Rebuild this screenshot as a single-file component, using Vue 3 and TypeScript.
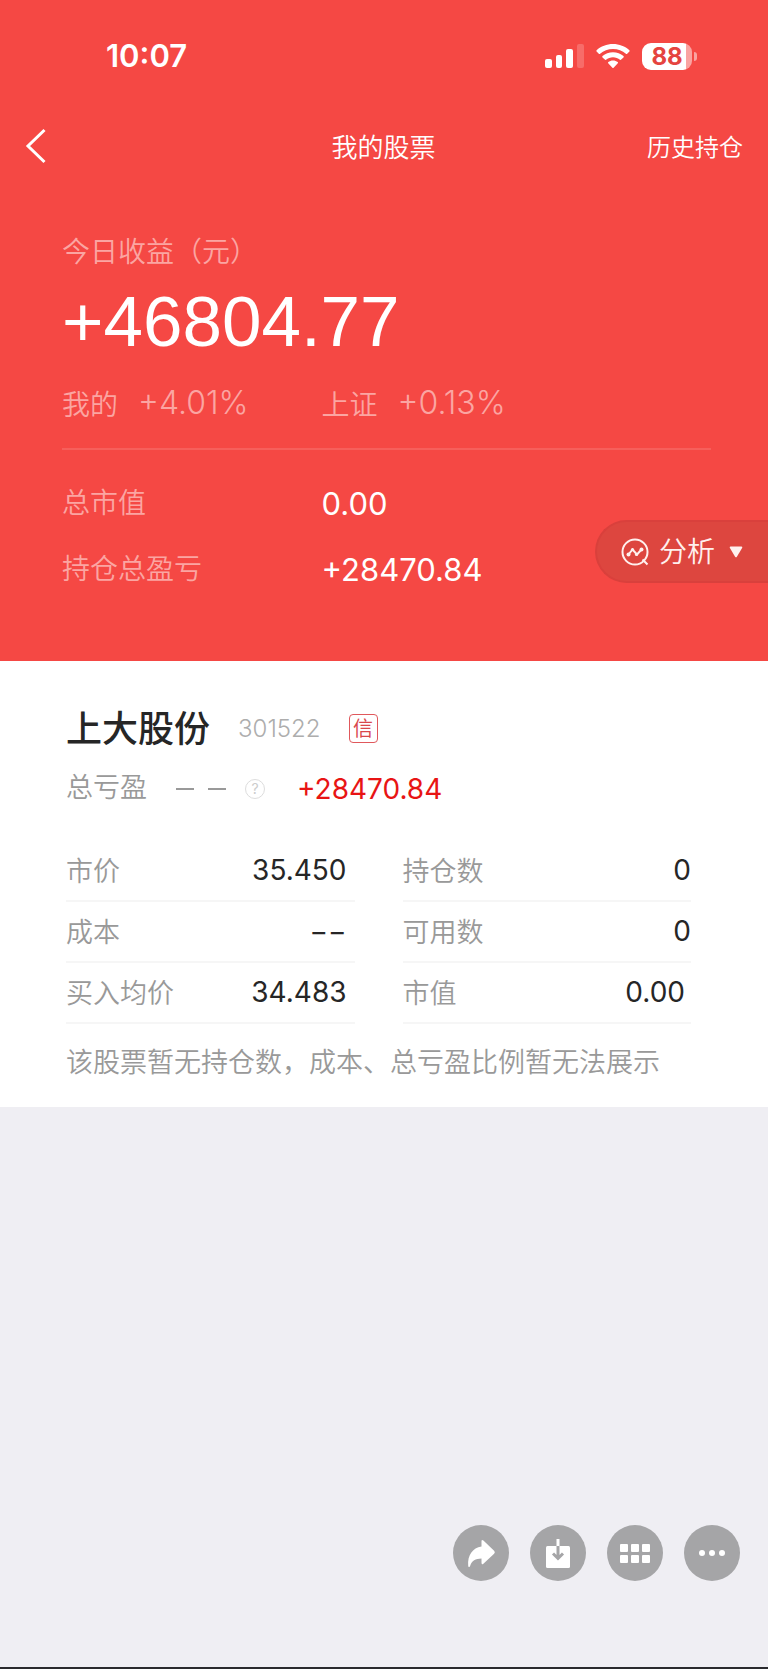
<script setup lang="ts">
interface Field {
  label: string
  value: string
  inset: number
}

const leftFields: Field[] = [
  { label: '市价', value: '35.450', inset: 8 },
  { label: '成本', value: '−−', inset: 8 },
  { label: '买入均价', value: '34.483', inset: 8 },
]
const rightFields: Field[] = [
  { label: '持仓数', value: '0', inset: 0 },
  { label: '可用数', value: '0', inset: 0 },
  { label: '市值', value: '0.00', inset: 6 },
]
const columns: Field[][] = [leftFields, rightFields]
</script>

<template>
  <div class="screen">
    <header class="hero">
      <div class="status">
        <span class="time">10:07</span>
        <div class="status-icons">
          <svg class="signal" viewBox="0 0 39 26" aria-hidden="true">
            <rect x="0" y="16" width="7" height="9" rx="2" />
            <rect x="11" y="12" width="6" height="13" rx="2" />
            <rect x="21" y="6" width="7" height="19" rx="2" />
            <rect x="32" y="1" width="7" height="24" rx="2" opacity="0.2" />
          </svg>
          <svg class="wifi" viewBox="0 0 34 26" aria-hidden="true">
            <path d="M17 1C10.700 1 4.900 3.300 .6 7.200c-.4.4-.4.900 0 1.300l2.200 2.200c.4.4.9.4 1.300 0C7.500 7.700 12 5.900 17 5.900s9.500 1.800 12.900 4.800c.4.4.9.4 1.300 0l2.200-2.200c.4-.4.4-.9 0-1.300C29.100 3.300 23.300 1 17 1z" />
            <path d="M17 9.200c-4 0-7.700 1.500-10.500 3.900-.4.4-.4.9 0 1.300l2.300 2.200c.4.4.8.4 1.200.1 1.900-1.600 4.300-2.500 7-2.500s5.100.9 7 2.500c.4.300.8.300 1.200-.1l2.300-2.200c.4-.4.4-.9 0-1.300C24.700 10.700 21 9.200 17 9.200z" />
            <path d="M17 17.400c-1.800 0-3.400.6-4.700 1.600-.4.400-.4.900-.1 1.300l4.200 4.400c.4.400.8.400 1.200 0l4.200-4.400c.4-.4.300-.9-.1-1.300-1.300-1-2.900-1.600-4.700-1.600z" />
          </svg>
          <div class="battery">
            <span class="cell">88</span>
            <span class="nub"></span>
          </div>
        </div>
      </div>

      <nav class="nav">
        <button class="back" type="button" aria-label="返回">
          <svg viewBox="0 0 24 36" aria-hidden="true"><path d="M20.500 2 4 18l16.500 16" /></svg>
        </button>
        <h1 class="title">我的股票</h1>
        <a class="history" href="#history">历史持仓</a>
      </nav>

      <section class="summary">
        <p class="today-label">今日收益（元）</p>
        <p class="today-value">+46804.77</p>
        <div class="pair rates">
          <p class="rate">我的<span class="pct">+4.01%</span></p>
          <p class="rate">上证<span class="pct">+0.13%</span></p>
        </div>
        <dl class="totals">
          <div class="pair total">
            <dt>总市值</dt>
            <dd>0.00</dd>
          </div>
          <div class="pair total">
            <dt>持仓总盈亏</dt>
            <dd>+28470.84</dd>
          </div>
        </dl>
        <button class="analyse" type="button">
          <svg class="lens" viewBox="0 0 28 28" aria-hidden="true">
            <circle cx="14" cy="14" r="12.500" />
            <path d="m21.500 21.500 5 5M7.500 16.500l4-5 4.500 5 4.500-5" />
            <g class="dots">
              <circle cx="7.500" cy="16.500" r="2" />
              <circle cx="11.500" cy="11.500" r="1.600" />
              <circle cx="15.500" cy="16.500" r="1.600" />
              <circle cx="20.500" cy="11.500" r="2" />
            </g>
          </svg>
          <span class="analyse-text">分析</span>
          <svg class="caret" viewBox="0 0 14 12" aria-hidden="true"><path d="M1.500.5h11q1.300.2.600 1.500l-5.200 8.800q-.9 1-1.800 0L.9 2Q.2.7 1.500.5z" /></svg>
        </button>
      </section>
    </header>

    <main class="holding">
      <div class="stock">
        <h2 class="name">上大股份</h2>
        <span class="code">301522</span>
        <span class="badge">信</span>
      </div>
      <div class="pnl">
        <span class="pnl-label">总亏盈</span>
        <span class="dashes" role="img" aria-label="无数据"><i></i><i></i></span>
        <button class="help" type="button" aria-label="说明">?</button>
        <span class="pnl-value">+28470.84</span>
      </div>
      <div class="grid">
        <dl v-for="(fields, i) in columns" :key="i" class="column">
          <div v-for="f in fields" :key="f.label" class="field">
            <dt>{{ f.label }}</dt>
            <dd :style="{ paddingRight: f.inset + 'px' }">{{ f.value }}</dd>
          </div>
        </dl>
      </div>
      <p class="note">该股票暂无持仓数，成本、总亏盈比例暂无法展示</p>
    </main>

    <footer class="tools">
      <button type="button" aria-label="分享">
        <svg viewBox="0 0 56 56" aria-hidden="true">
          <path d="M28.500 16.500q0-2.300 1.900-.9l10.700 10.200q1.500 1.500 0 3L30.400 38.700q-1.900 1.400-1.900-.9v-4.300c-6 .2-9.700 2.300-11.300 7.300-.4 1.700-1.900 1.700-2 0C14.300 30.500 19.600 22.800 28.500 21.600z" />
        </svg>
      </button>
      <button type="button" aria-label="保存">
        <svg viewBox="0 0 56 56" aria-hidden="true">
          <rect x="16" y="21" width="24" height="22" rx="1.500" />
          <path class="stem" d="M28 14v8" />
          <path class="arrow" d="M28 21v12M23 28.500l5 5 5-5" />
        </svg>
      </button>
      <button type="button" aria-label="宫格">
        <svg viewBox="0 0 56 56" aria-hidden="true">
          <rect x="13" y="19" width="8" height="8" rx="1" />
          <rect x="24" y="19" width="8" height="8" rx="1" />
          <rect x="35" y="19" width="8" height="8" rx="1" />
          <rect x="13" y="30" width="8" height="8" rx="1" />
          <rect x="24" y="30" width="8" height="8" rx="1" />
          <rect x="35" y="30" width="8" height="8" rx="1" />
        </svg>
      </button>
      <button type="button" aria-label="更多">
        <svg viewBox="0 0 56 56" aria-hidden="true">
          <circle cx="18" cy="28" r="3" />
          <circle cx="28" cy="28" r="3" />
          <circle cx="38" cy="28" r="3" />
        </svg>
      </button>
    </footer>
  </div>
</template>

<style>
body {
  margin: 0;
  background: #efeef3;
}
</style>

<style scoped>
.screen {
  --num: Inter, 'Noto Sans CJK SC', sans-serif;
  display: flex;
  flex-direction: column;
  min-height: 100vh;
  box-sizing: border-box;
  border-bottom: 2px solid #2a2a2e;
  background: #efeef3;
  font-family: 'Noto Sans CJK SC', sans-serif;
  font-weight: 350;
}
p, h1, h2, dl, dd {
  margin: 0;
}
button {
  padding: 0;
  border: 0;
  background: none;
  font: inherit;
  color: inherit;
}
svg {
  display: block;
}

.hero {
  padding-bottom: 58px;
  background: #f54844;
  color: #fff;
}
.status {
  display: flex;
  justify-content: space-between;
  align-items: center;
  padding: 36px 71px 0 106px;
  height: 40px;
}
.time {
  font: 600 31px/40px var(--num);
}
.status-icons {
  display: flex;
  align-items: center;
  gap: 12px;
  fill: #fff;
}
.signal {
  width: 39px;
  height: 26px;
}
.wifi {
  width: 34px;
  height: 26px;
}
.battery {
  display: flex;
  align-items: center;
  gap: 2px;
}
.cell {
  width: 50px;
  height: 27px;
  border-radius: 9px;
  background: linear-gradient(90deg, #fff 44px, #faa3a1 44px);
  color: #e5443f;
  font: 700 24px/27px var(--num);
  text-align: center;
}
.nub {
  width: 3px;
  height: 9px;
  border-radius: 0 4px 4px 0;
  background: #faa3a1;
}

.nav {
  display: grid;
  grid-template-columns: 1fr auto 1fr;
  align-items: center;
  height: 60px;
  padding: 40px 25px 0 24px;
}
.back {
  width: 24px;
  height: 36px;
}
.back path {
  fill: none;
  stroke: #fff;
  stroke-width: 3;
}
.title {
  font-size: 26px;
  line-height: 40px;
  font-weight: 350;
}
.history {
  justify-self: end;
  color: #fff;
  font-size: 24px;
  line-height: 40px;
  text-decoration: none;
}

.summary {
  position: relative;
  padding: 54px 57px 0 62px;
}
.today-label {
  font-size: 28px;
  line-height: 40px;
  color: #fba5a2;
}
.today-value {
  padding: 12px 0 20px;
  font: 400 71px/80px 'Liberation Sans', Arial, sans-serif;
}
.pair {
  display: grid;
  grid-template-columns: 2fr 3fr;
  align-items: center;
}
.rates {
  padding-bottom: 24px;
  border-bottom: 2px solid #f65f5b;
  color: #fba5a2;
}
.rate {
  display: flex;
  align-items: center;
  gap: 20px;
  font-size: 28px;
  line-height: 42px;
}
.pct {
  font: 300 32px/42px var(--num);
}
.totals {
  padding-top: 21px;
}
.total {
  height: 66px;
}
.total dt {
  padding-bottom: 6px;
  font-size: 28px;
  line-height: 40px;
  color: #fba5a2;
}
.total dd {
  font: 400 31px/40px var(--num);
}
.analyse {
  position: absolute;
  right: 0;
  bottom: 20px;
  display: flex;
  align-items: center;
  box-sizing: border-box;
  height: 63px;
  padding: 0 25px 0 24px;
  border: 2px solid #d9403c;
  border-right: 0;
  border-radius: 32px 0 0 32px;
  background: #dd463f;
  color: #fff0ee;
  font-size: 28px;
}
.analyse-text {
  padding-bottom: 4px;
}
.lens {
  width: 28px;
  height: 28px;
  margin-right: 10px;
  fill: none;
  stroke: #fff0ee;
  stroke-width: 2;
}
.dots {
  fill: #fff0ee;
  stroke: none;
}
.caret {
  width: 14px;
  height: 12px;
  margin-left: 14px;
  fill: #fff0ee;
}

.holding {
  padding: 37px 77px 26px 66px;
  background: #fff;
  color: #999;
}
.stock {
  display: flex;
  align-items: center;
  height: 61px;
}
.name {
  padding-bottom: 6px;
  font-size: 36px;
  line-height: 52px;
  font-weight: 500;
  color: #262626;
}
.code {
  margin-left: 28px;
  font: 300 24px/40px var(--num);
  color: #adadad;
}
.badge {
  box-sizing: border-box;
  width: 29px;
  height: 29px;
  margin-left: 28px;
  border: 1px solid #e0585c;
  border-radius: 4px;
  font-size: 20px;
  line-height: 26px;
  font-weight: 400;
  text-align: center;
  color: #d9484c;
}
.pnl {
  display: flex;
  align-items: center;
  height: 60px;
}
.pnl-label {
  padding-bottom: 6px;
  font-size: 27px;
  line-height: 40px;
}
.dashes {
  display: flex;
  gap: 14px;
  margin-left: 29px;
}
.dashes i {
  width: 18px;
  height: 2px;
  background: #999;
}
.help {
  box-sizing: border-box;
  width: 20px;
  height: 20px;
  margin: 0 32px 0 19px;
  border: 1px solid #ddd;
  border-radius: 50%;
  font: 400 14px/18px var(--num);
  color: #ccc;
}
.pnl-value {
  font: 400 28px/40px var(--num);
  color: #e81414;
}
.grid {
  display: grid;
  grid-template-columns: 1fr 1fr;
  gap: 48px;
  padding-top: 22px;
}
.field {
  display: flex;
  justify-content: space-between;
  align-items: center;
  box-sizing: border-box;
  height: 61px;
  padding-bottom: 1px;
  border-bottom: 2px solid #f6f6f6;
}
.field dt {
  font-size: 27px;
  line-height: 40px;
}
.field dd {
  font: 400 28px/40px var(--num);
  color: #262626;
}
.note {
  padding-top: 17px;
  font-size: 27px;
  line-height: 40px;
}

.tools {
  display: flex;
  justify-content: flex-end;
  gap: 21px;
  margin-top: auto;
  padding: 0 28px 86px;
}
.tools button {
  width: 56px;
  height: 56px;
  border-radius: 50%;
  background: #a5a5a7;
}
.tools svg {
  fill: #fff;
}
.stem {
  stroke: #fff;
  stroke-width: 3;
}
.arrow {
  fill: none;
  stroke: #a5a5a7;
  stroke-width: 3;
}
</style>
